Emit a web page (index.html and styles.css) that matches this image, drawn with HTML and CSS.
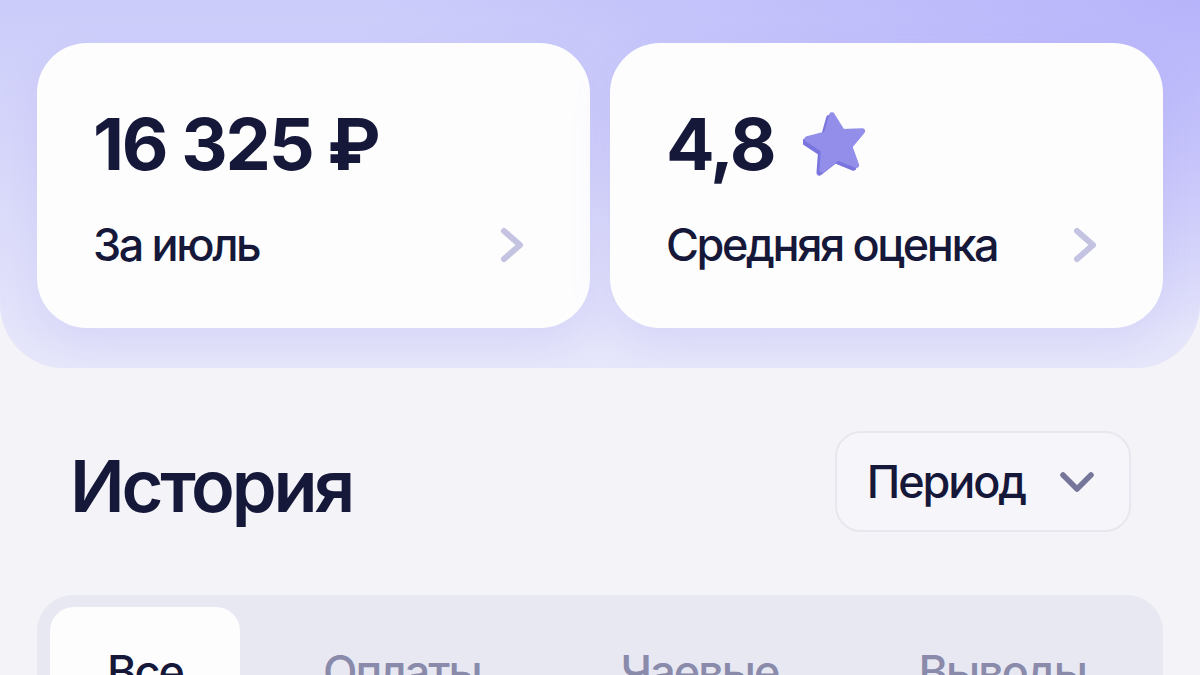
FILE: index.html
```html
<!DOCTYPE html>
<html lang="ru">
<head>
    <meta charset="UTF-8">
    <meta name="viewport" content="width=device-width, initial-scale=1.0">
    <title>Доход</title>
    <link rel="stylesheet" href="styles.css">
</head>
<body>
    <header class="summary">
        <a class="stat-card" href="#">
            <div class="stat-value">16 325 ₽</div>
            <div class="stat-row">
                <span class="stat-label">За июль</span>
                <svg class="chevron-right" viewBox="0 0 24 36" width="24" height="36">
                    <path d="M4 4 L20 18 L4 32" fill="none" stroke="currentColor" stroke-width="6" stroke-linecap="round" stroke-linejoin="round"/>
                </svg>
            </div>
        </a>
        <a class="stat-card" href="#">
            <div class="stat-value">
                4,8
                <svg class="star" viewBox="-34 -34 68 68" width="66" height="66">
                    <polygon transform="translate(-3 3)" points="-4.2,-29.7 6.6,-12.4 27,-13.2 13.8,2.4 20.8,21.6 1.9,13.9 -14.1,26.5 -12.6,6.1 -29.5,-5.2 -9.7,-10.1" fill="#7a74de" stroke="#7a74de" stroke-width="6" stroke-linejoin="round"/>
                    <polygon points="-4.2,-29.7 6.6,-12.4 27,-13.2 13.8,2.4 20.8,21.6 1.9,13.9 -14.1,26.5 -12.6,6.1 -29.5,-5.2 -9.7,-10.1" fill="#938ee9" stroke="#938ee9" stroke-width="6" stroke-linejoin="round"/>
                </svg>
            </div>
            <div class="stat-row">
                <span class="stat-label">Средняя оценка</span>
                <svg class="chevron-right" viewBox="0 0 24 36" width="24" height="36">
                    <path d="M4 4 L20 18 L4 32" fill="none" stroke="currentColor" stroke-width="6" stroke-linecap="round" stroke-linejoin="round"/>
                </svg>
            </div>
        </a>
    </header>

    <section class="history">
        <div class="history-head">
            <h1>История</h1>
            <button class="period-btn" type="button">
                Период
                <svg viewBox="0 0 36 22" width="36" height="22">
                    <path d="M4 4 L18 18 L32 4" fill="none" stroke="currentColor" stroke-width="5.5" stroke-linecap="round" stroke-linejoin="round"/>
                </svg>
            </button>
        </div>

        <div class="tabs">
            <button class="tab active" type="button">Все</button>
            <button class="tab" type="button">Оплаты</button>
            <button class="tab" type="button">Чаевые</button>
            <button class="tab" type="button">Выводы</button>
        </div>
    </section>
</body>
</html>
```

FILE: styles.css
```css
body {
    margin: 0;
    background: #f4f4f8;
    font-family: Inter, "Noto Sans", sans-serif;
    color: #16183a;
}

/* top block with the two stat cards */
.summary {
    display: grid;
    grid-template-columns: 1fr 1fr;
    gap: 20px;
    padding: 43px 37px 40px;
    border-radius: 0 0 64px 64px;
    background:
        radial-gradient(ellipse 70% 90% at 100% 0%, #b8b4fb 0%, rgba(184, 180, 251, 0) 100%),
        linear-gradient(180deg, #cbccfa 0%, #d9d9fa 50%, #e7e7fb 100%);
}
.stat-card {
    display: block;
    height: 285px;
    box-sizing: border-box;
    padding: 65px 66px 0 56px;
    border-radius: 50px;
    background: #fdfdfe;
    box-shadow: 0 18px 40px rgba(140, 132, 232, 0.14);
    color: inherit;
    text-decoration: none;
}
.stat-value {
    display: flex;
    align-items: center;
    gap: 28px;
    height: 72px;
    font-size: 72px;
    line-height: 1;
    font-weight: 700;
    letter-spacing: -2.2px;
}
.stat-row {
    display: flex;
    justify-content: space-between;
    align-items: center;
    margin-top: 42px;
}
.stat-label {
    font-size: 45px;
    line-height: 1;
    font-weight: 500;
    letter-spacing: -2.4px;
}
.chevron-right {
    color: #c4c3e2;
}

/* history list header */
.history {
    padding: 63px 37px 0;
}
.history-head {
    display: flex;
    justify-content: space-between;
    align-items: center;
    padding: 0 32px 0 33px;
}
.history-head h1 {
    margin: 8px 0 0;
    font-size: 72px;
    line-height: 1;
    font-weight: 600;
    letter-spacing: -3.2px;
}
.period-btn {
    display: flex;
    align-items: center;
    gap: 34px;
    height: 101px;
    padding: 0 34px 0 30px;
    border: 2px solid #e7e7ef;
    border-radius: 26px;
    background: #f6f6fa;
    font-family: inherit;
    font-size: 45px;
    font-weight: 500;
    letter-spacing: -2.1px;
    color: #16183a;
}
.period-btn svg {
    color: #76769a;
}

.tabs {
    display: flex;
    justify-content: space-between;
    margin-top: 63px;
    padding: 12px 13px;
    border-radius: 36px;
    background: #e8e8f3;
}
.tab {
    padding: 42px 57px 40px;
    border: none;
    border-radius: 24px;
    background: transparent;
    font-family: inherit;
    font-size: 45px;
    line-height: 1;
    font-weight: 500;
    letter-spacing: -2px;
    color: #8a8aab;
}
.tab:last-child {
    padding-right: 64px;
}
.tab.active {
    background: #fdfdfe;
    color: #16183a;
}
```
